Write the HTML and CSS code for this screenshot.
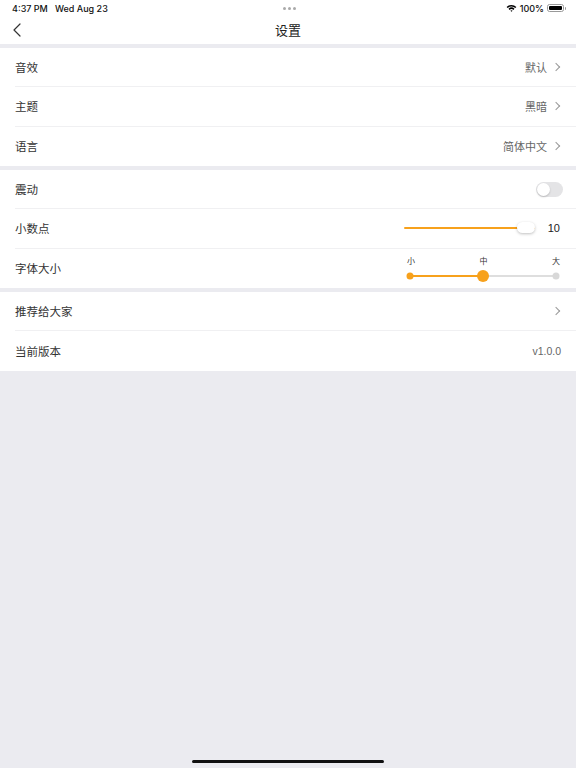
FILE: index.html
```html
<!DOCTYPE html>
<html lang="zh-CN">
<head>
  <meta charset="utf-8">
  <meta name="viewport" content="width=device-width, initial-scale=1" />
  <title>设置</title>
  <link rel="stylesheet" href="styles.css">
</head>
<body>
  <div class="statusbar">
    <div class="status-left">4:37 PM&nbsp;&nbsp;&nbsp;Wed Aug 23</div>
    <div class="status-dots"><i></i><i></i><i></i></div>
    <div class="status-right">
      <svg class="wifi" width="11" height="8" viewBox="0 0 11 8">
        <path d="M0.6 2.9 A7 7 0 0 1 10.4 2.9 L9.3 4 A5.4 5.4 0 0 0 1.7 4 Z" fill="#000"/>
        <path d="M2.5 4.8 A4.3 4.3 0 0 1 8.5 4.8 L7.4 5.9 A2.8 2.8 0 0 0 3.6 5.9 Z" fill="#000"/>
        <path d="M4.4 6.7 A1.6 1.6 0 0 1 6.6 6.7 L5.5 7.8 Z" fill="#000"/>
      </svg>
      <span>100%</span>
      <span class="battery"><span class="battery-level"></span></span>
    </div>
  </div>

  <header class="navbar">
    <svg class="back" width="10" height="14" viewBox="0 0 10 14">
      <path d="M8 1 L2 7 L8 13" fill="none" stroke="#333" stroke-width="1.2" stroke-linecap="round" stroke-linejoin="round"/>
    </svg>
    <h1>设置</h1>
  </header>

  <main class="settings">
    <section class="group">
      <div class="row"><span class="label">音效</span><span class="value">默认</span><span class="chevron"></span></div>
      <div class="row"><span class="label">主题</span><span class="value">黑暗</span><span class="chevron"></span></div>
      <div class="row"><span class="label">语言</span><span class="value">简体中文</span><span class="chevron"></span></div>
    </section>

    <section class="group">
      <div class="row">
        <span class="label">震动</span>
        <span class="switch"><span class="knob"></span></span>
      </div>
      <div class="row">
        <span class="label">小数点</span>
        <span class="slider">
          <span class="slider-fill"></span>
          <span class="slider-thumb"></span>
        </span>
        <span class="slider-value">10</span>
      </div>
      <div class="row">
        <span class="label">字体大小</span>
        <div class="stepper">
          <div class="stepper-labels"><span>小</span><span>中</span><span>大</span></div>
          <div class="stepper-track">
            <span class="stepper-done"></span>
            <span class="dot dot-on"></span>
            <span class="dot dot-current"></span>
            <span class="dot dot-off"></span>
          </div>
        </div>
      </div>
    </section>

    <section class="group">
      <div class="row"><span class="label">推荐给大家</span><span class="chevron"></span></div>
      <div class="row"><span class="label">当前版本</span><span class="value version">v1.0.0</span></div>
    </section>
  </main>

  <div class="home-indicator"></div>
</body>
</html>
```

FILE: styles.css
```css
* {
  box-sizing: border-box;
}
body {
  margin: 0;
  height: 768px;
  background: #ebebf0;
  font-family: "Noto Sans CJK SC", "Noto Sans", sans-serif;
  color: #333;
  overflow: hidden;
}

/* status bar */
.statusbar {
  height: 16px;
  background: #fff;
  display: flex;
  align-items: center;
  justify-content: space-between;
  padding: 0 10px 0 12px;
  font-family: Inter, "Liberation Sans", sans-serif;
  font-size: 9px;
  font-weight: 500;
  color: #111;
}
.status-left,
.status-right {
  width: 120px;
}
.status-right {
  display: flex;
  align-items: center;
  justify-content: flex-end;
  gap: 3px;
}
.status-dots {
  display: flex;
  gap: 2px;
}
.status-dots i {
  width: 3px;
  height: 3px;
  border-radius: 50%;
  background: #aaa;
}
.battery {
  position: relative;
  width: 17px;
  height: 8px;
  border: 1px solid #999;
  border-radius: 2.5px;
  padding: 1px;
  margin-right: 2px;
}
.battery::after {
  content: "";
  position: absolute;
  right: -3px;
  top: 2px;
  width: 1.5px;
  height: 3px;
  background: #999;
  border-radius: 0 1px 1px 0;
}
.battery-level {
  display: block;
  height: 100%;
  background: #000;
  border-radius: 1px;
}

/* navigation */
.navbar {
  height: 28px;
  background: #fff;
  display: flex;
  align-items: center;
  justify-content: center;
  position: relative;
  padding-bottom: 2px;
}
.navbar h1 {
  margin: 0;
  font-size: 13px;
  font-weight: normal;
  color: #222;
}
.back {
  position: absolute;
  left: 12px;
  top: 7px;
}

/* list */
.settings {
  padding-top: 4px;
  display: flex;
  flex-direction: column;
  gap: 4px;
}
.group {
  background: #fff;
  padding-left: 15px;
}
.row {
  height: 39.33px;
  display: flex;
  align-items: center;
  padding-right: 14px;
  border-bottom: 1px solid #f0f0f2;
}
.row:last-child {
  border-bottom: none;
}
.label {
  flex: 1;
  font-size: 11.5px;
  color: #333;
}
.value {
  font-size: 11px;
  color: #666;
}
.value.version {
  font-family: "Liberation Sans", Arial, sans-serif;
  font-size: 10.5px;
  margin-right: 1px;
}
.chevron {
  width: 6px;
  height: 6px;
  border-top: 1px solid #999;
  border-right: 1px solid #999;
  transform: rotate(45deg);
  margin-left: 6px;
  margin-right: 3px;
}

/* toggle */
.switch {
  width: 27px;
  height: 15px;
  border-radius: 8px;
  background: #e4e4e6;
  padding: 1px;
  margin-right: -1px;
}
.knob {
  display: block;
  width: 13px;
  height: 13px;
  border-radius: 50%;
  background: #fff;
  box-shadow: 0 1px 2px rgba(0, 0, 0, 0.2);
}

/* decimal slider */
.slider {
  position: relative;
  width: 131px;
  height: 2px;
  background: #f7a11c;
  border-radius: 1px;
}
.slider-thumb {
  position: absolute;
  right: 0;
  top: -5px;
  width: 18px;
  height: 11px;
  border-radius: 6px;
  background: #fff;
  box-shadow: 0 1px 3px rgba(0, 0, 0, 0.25);
}
.slider-value {
  width: 25px;
  text-align: right;
  font-family: "Liberation Sans", Arial, sans-serif;
  font-size: 11px;
  color: #222;
  margin-right: 2px;
}

/* font size stepper */
.stepper {
  width: 155px;
  margin-right: 2px;
  align-self: flex-start;
  padding-top: 6px;
}
.stepper-labels {
  display: flex;
  justify-content: space-between;
  font-size: 8px;
  color: #333;
  padding: 0 0 0 2px;
  height: 12px;
  line-height: 12px;
}
.stepper-track {
  position: relative;
  margin: 8px 4px 0 5px;
  height: 2px;
  background: #dedede;
}
.stepper-done {
  position: absolute;
  left: 0;
  top: 0;
  width: 50%;
  height: 2px;
  background: #f7a11c;
}
.dot {
  position: absolute;
  top: 1px;
  border-radius: 50%;
  transform: translate(-50%, -50%);
}
.dot-on {
  left: 0;
  width: 7px;
  height: 7px;
  background: #f7a11c;
}
.dot-current {
  left: 50%;
  width: 12px;
  height: 12px;
  background: #f7a11c;
}
.dot-off {
  left: 100%;
  width: 7px;
  height: 7px;
  background: #d8d8d8;
}

.home-indicator {
  position: fixed;
  left: 192px;
  bottom: 5px;
  width: 192px;
  height: 3px;
  border-radius: 2px;
  background: #111;
}
```
